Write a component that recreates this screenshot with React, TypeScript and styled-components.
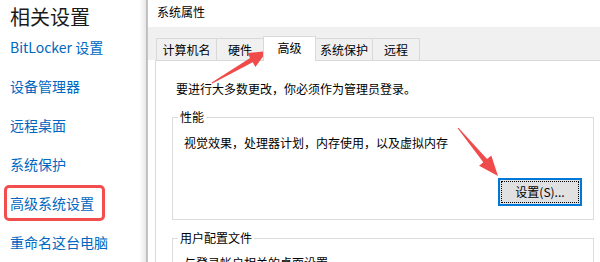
import React from "react";
import styled, { createGlobalStyle } from "styled-components";

const GlobalStyle = createGlobalStyle`
    html, body {
        margin: 0;
        padding: 0;
        background: #ffffff;
        overflow: hidden;
    }
`;

const Screen = styled.div`
    position: relative;
    width: 600px;
    height: 262px;
    display: flex;
    overflow: hidden;
    background: #ffffff;
    font-family: "Noto Sans CJK SC", "Noto Sans", sans-serif;
`;

const LeftPanel = styled.div`
    width: 140px;
    flex-shrink: 0;
    padding: 6px 0 0 10px;
    box-sizing: border-box;
`;

const Heading = styled.div`
    font-size: 20px;
    line-height: 22px;
    color: #1b1b1b;
    white-space: nowrap;
`;

const LinkList = styled.div`
    display: flex;
    flex-direction: column;
`;

const LinkRow = styled.div`
    height: 39px;
    line-height: 39px;
    font-size: 14px;
    color: #0067c0;
    white-space: nowrap;
`;

const LinkText = styled.span<{ $highlight?: boolean }>`
    position: relative;
    &::after {
        content: "";
        display: ${(p) => (p.$highlight ? "block" : "none")};
        position: absolute;
        top: -8px;
        bottom: -8px;
        left: -6px;
        right: -11px;
        border: 3px solid #f24e4e;
        border-radius: 5px;
    }
`;

const Divider = styled.div`
    width: 8px;
    flex-shrink: 0;
    background: linear-gradient(
        to right,
        #fbfbfb 0,
        #e9e9e9 6px,
        #b9b9b9 6px,
        #c9c9c9 8px
    );
`;

const Dialog = styled.div`
    flex: 1;
    min-width: 0;
    display: flex;
    flex-direction: column;
    font-size: 12px;
    color: #000;
`;

const TitleBar = styled.div`
    height: 27px;
    line-height: 24px;
    padding-left: 9px;
    flex-shrink: 0;
`;

const TabRow = styled.div`
    height: 33px;
    flex-shrink: 0;
    display: flex;
    align-items: flex-end;
    padding-left: 8px;
    background: #f0f0f0;
`;

const Tab = styled.div<{ $width: number; $active?: boolean }>`
    position: relative;
    z-index: ${(p) => (p.$active ? 1 : 0)};
    width: ${(p) => p.$width}px;
    height: ${(p) => (p.$active ? 25 : 22)}px;
    margin-right: -1px;
    margin-bottom: ${(p) => (p.$active ? -1 : 0)}px;
    box-sizing: border-box;
    border: 1px solid #d9d9d9;
    border-bottom: none;
    background: ${(p) => (p.$active ? "#ffffff" : "#f0f0f0")};
    display: flex;
    align-items: center;
    justify-content: center;
    padding-bottom: ${(p) => (p.$active ? 2 : 0)}px;
    line-height: 16px;
    white-space: nowrap;
`;

const TabPanel = styled.div`
    flex: 1;
    margin-left: 7px;
    border-left: 1px solid #d9d9d9;
    border-top: 1px solid #d9d9d9;
    background: #ffffff;
    padding: 20px 0 0 16px;
`;

const Intro = styled.div`
    line-height: 16px;
    margin-left: 4px;
    white-space: nowrap;
`;

const Group = styled.fieldset<{ $gap: number }>`
    width: 422px;
    box-sizing: border-box;
    margin: ${(p) => p.$gap}px 0 0 0;
    padding: 0 11px 13px 11px;
    border: 1px solid #dcdcdc;
    min-width: 0;
`;

const GroupLabel = styled.legend`
    font-size: 12px;
    line-height: 16px;
    padding: 0 2px;
    margin-left: -6px;
`;

const GroupText = styled.div<{ $top: number }>`
    line-height: 16px;
    margin-top: ${(p) => p.$top}px;
    white-space: nowrap;
`;

const ButtonRow = styled.div`
    display: flex;
    justify-content: flex-end;
    margin-top: 27px;
`;

const Button = styled.div`
    position: relative;
    width: 84px;
    height: 28px;
    box-sizing: border-box;
    border: 2px solid #0078d7;
    background: #e1e1e1;
    display: flex;
    align-items: center;
    justify-content: center;
    line-height: 16px;
    &::before {
        content: "";
        position: absolute;
        inset: 1px;
        border: 1px dotted #000;
    }
`;

const Overlay = styled.svg`
    position: absolute;
    top: 0;
    left: 0;
    pointer-events: none;
`;

const links = [
    "BitLocker 设置",
    "设备管理器",
    "远程桌面",
    "系统保护",
    "高级系统设置",
    "重命名这台电脑",
];

const tabs = [
    { label: "计算机名", width: 61 },
    { label: "硬件", width: 48 },
    { label: "高级", width: 53, active: true },
    { label: "系统保护", width: 58 },
    { label: "远程", width: 48 },
];

const App: React.FC = () => {
    return (
        <Screen>
            <GlobalStyle />
            <LeftPanel>
                <Heading>相关设置</Heading>
                <LinkList>
                    {links.map((item) => (
                        <LinkRow key={item}>
                            <LinkText $highlight={item === "高级系统设置"}>
                                {item}
                            </LinkText>
                        </LinkRow>
                    ))}
                </LinkList>
            </LeftPanel>
            <Divider />
            <Dialog>
                <TitleBar>系统属性</TitleBar>
                <TabRow>
                    {tabs.map((t) => (
                        <Tab key={t.label} $width={t.width} $active={t.active}>
                            {t.label}
                        </Tab>
                    ))}
                </TabRow>
                <TabPanel>
                    <Intro>要进行大多数更改，你必须作为管理员登录。</Intro>
                    <Group $gap={12}>
                        <GroupLabel>性能</GroupLabel>
                        <GroupText $top={10}>
                            视觉效果，处理器计划，内存使用，以及虚拟内存
                        </GroupText>
                        <ButtonRow>
                            <Button>设置(S)...</Button>
                        </ButtonRow>
                    </Group>
                    <Group $gap={10}>
                        <GroupLabel>用户配置文件</GroupLabel>
                        <GroupText $top={9}>与登录帐户相关的桌面设置</GroupText>
                    </Group>
                </TabPanel>
            </Dialog>
            <Overlay width="600" height="262" viewBox="0 0 600 262">
                {/* arrow pointing at the 高级 tab */}
                <polygon
                    fill="#f04b4b"
                    points="212.3,83.4 252.7,62.2 255.4,67 267,51 247.4,53.1 250.1,57.9 211.7,82.6"
                />
                {/* arrow pointing at the settings button */}
                <polygon
                    fill="#f04b4b"
                    points="457.6,128.3 483.3,162.2 479.1,165.7 498,176 491.3,155.5 487.1,159 458.4,127.7"
                />
            </Overlay>
        </Screen>
    );
};

export default App;
